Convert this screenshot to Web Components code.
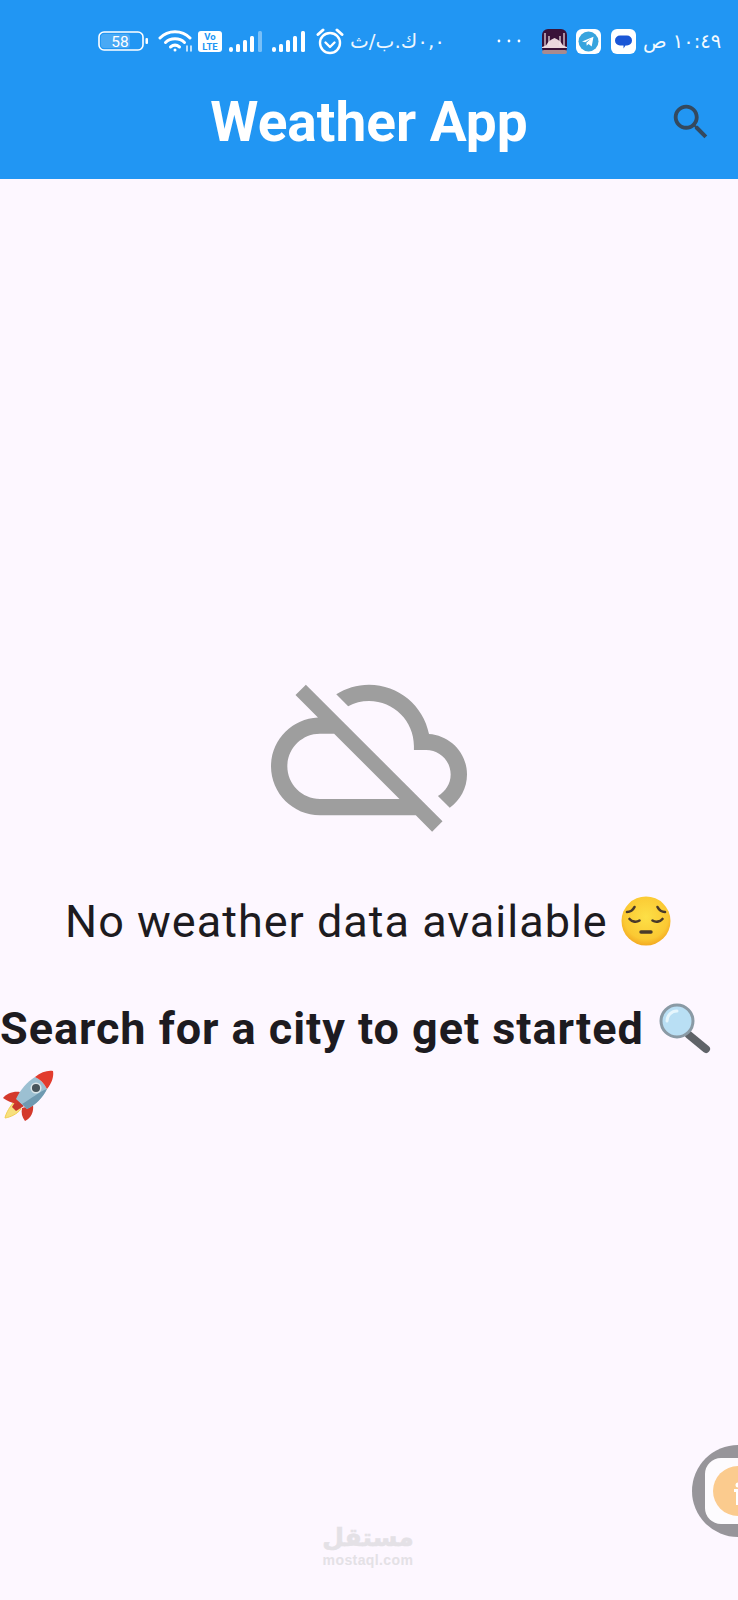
<!DOCTYPE html>
<html lang="en">
<head>
<meta charset="utf-8">
<title>Weather App</title>
<style>
  html, body { margin: 0; height: 100%; }
  body {
    width: 738px;
    height: 1600px;
    overflow: hidden;
    display: flex;
    flex-direction: column;
    position: relative;
    background: #fdf7ff;
    font-family: Roboto, "Liberation Sans", sans-serif;
  }
</style>
</head>
<body>
<weather-header title-text="Weather App"></weather-header>
<empty-state>
  <span slot="first">No weather data available <app-emoji name="pensive"></app-emoji></span>
  <span slot="second">Search for a city to get started <app-emoji name="magnifier"></app-emoji> <app-emoji name="rocket"></app-emoji></span>
</empty-state>
<float-bubble></float-bubble>
<site-mark></site-mark>

<script>
const statusTemplate = document.createElement('template');
statusTemplate.innerHTML = /*html*/`
  <style>
    :host {
      display: flex;
      align-items: center;
      height: 82px;
      padding-left: 98px;
      color: #fff;
      box-sizing: border-box;
    }
    svg { display: block; flex: none; }
    .speed {
      font: 20px "DejaVu Sans", sans-serif;
      margin-left: 6px;
      width: 94px;
      white-space: nowrap;
      opacity: .92;
      direction: ltr;
    }
    .dots { margin-left: 53px; }
    .time {
      font: 19.500px "DejaVu Sans", sans-serif;
      margin-left: 7px;
      white-space: nowrap;
      opacity: .95;
    }
  </style>
  <svg width="50" height="20" viewBox="0 0 50 20" style="margin-right:10px">
    <rect x="1" y="1" width="44" height="18" rx="5" fill="none" stroke="#fff" stroke-width="1.600"/>
    <rect x="3" y="3" width="29" height="14" rx="3" fill="#fff" opacity=".18"/>
    <rect x="47.500" y="7" width="2.500" height="6" rx="1" fill="#fff"/>
    <text x="22" y="15.500" font-family="Roboto" font-size="15.500" font-weight="400" fill="#fff" text-anchor="middle">58</text>
  </svg>
  <svg width="36" height="22" viewBox="0 0 36 22" style="margin-right:4px" fill="none" stroke="#fff" stroke-width="3" stroke-linecap="round">
    <path d="M2 8C10-.5 24-.5 32 8"/>
    <path d="M7.500 12.500C12.500 7.500 21.500 7.500 26.500 12.500"/>
    <path d="M12.500 17C15.500 14.500 18.500 14.500 21.500 17"/>
    <circle cx="17" cy="20" r="1.500" fill="#fff" stroke="none"/>
    <path d="M29 16v5M33 16v5" stroke-width="1.400"/>
  </svg>
  <svg width="24" height="21" viewBox="0 0 24 21" style="margin-right:7px">
    <rect width="24" height="21" rx="3" fill="#fff"/>
    <text x="12" y="9" font-family="Roboto" font-size="9.500" font-weight="700" fill="#2196f3" text-anchor="middle">Vo</text>
    <text x="12" y="18.500" font-family="Roboto" font-size="9.500" font-weight="700" fill="#2196f3" text-anchor="middle">LTE</text>
  </svg>
  <svg width="34" height="21" viewBox="0 0 34 21" style="margin-right:9px" fill="#fff">
    <rect x="0" y="16" width="4" height="5" rx="2"/>
    <rect x="7" y="13" width="4" height="8" rx="1.500"/>
    <rect x="14" y="9" width="4" height="12" rx="1.500"/>
    <rect x="21" y="5" width="4" height="16" rx="1.500"/>
    <rect x="29" y="0" width="4" height="21" rx="1.500" opacity=".4"/>
  </svg>
  <svg width="34" height="21" viewBox="0 0 34 21" style="margin-right:10px" fill="#fff">
    <rect x="0" y="16" width="4" height="5" rx="2"/>
    <rect x="7" y="13" width="4" height="8" rx="1.500"/>
    <rect x="14" y="9" width="4" height="12" rx="1.500"/>
    <rect x="21" y="5" width="4" height="16" rx="1.500"/>
    <rect x="29" y="0" width="4" height="21" rx="1.500"/>
  </svg>
  <svg width="28" height="27" viewBox="0 0 28 27" fill="none" stroke="#fff">
    <circle cx="14" cy="15" r="10" stroke-width="2.400"/>
    <path d="M9.500 14.500l4.500 4.500 4.500-4.500" stroke-width="2.400" stroke-linecap="round" stroke-linejoin="round"/>
    <path d="M2 6.500L7 2M26 6.500L21 2" stroke-width="3" stroke-linecap="round"/>
  </svg>
  <span class="speed">٠,٠ك.ب/ث</span>
  <svg class="dots" width="24" height="4" viewBox="0 0 24 4" fill="#fff">
    <circle cx="2" cy="2" r="1.400"/><circle cx="12" cy="2" r="1.400"/><circle cx="22" cy="2" r="1.400"/>
  </svg>
  <svg width="25" height="25" viewBox="0 0 25 25" style="margin-left:21px">
    <rect width="25" height="25" rx="6" fill="#3a1338"/>
    <path d="M0 19h25v-1c-2-1-4-1-5-3-1-2-3-4-7.500-6C8 11 6 13 5 15c-1 2-3 2-5 3z" fill="#ead7dc"/>
    <path d="M3 4v14M22 4v14M7 7v10M18 7v10" stroke="#f2e4e8" stroke-width="1.200"/>
    <rect x="0" y="21" width="25" height="4" rx="2" fill="#a98a8e"/>
  </svg>
  <svg width="25" height="25" viewBox="0 0 25 25" style="margin-left:9px">
    <rect width="25" height="25" rx="6" fill="#fff"/>
    <circle cx="12.500" cy="12.500" r="10" fill="#37a4de"/>
    <path d="M6 12.500l11.500-4.700-1.800 9.700-3.200-2.400-1.800 1.700-.3-3 4.500-4-5.700 3.400z" fill="#fff"/>
  </svg>
  <svg width="25" height="25" viewBox="0 0 25 25" style="margin-left:10px">
    <rect width="25" height="25" rx="6" fill="#fff"/>
    <path d="M9 6.500h7a5 5 0 0 1 0 10h-1.500l-2 3v-3H9a5 5 0 0 1 0-10z" fill="#1a56d6"/>
  </svg>
  <span class="time" dir="rtl">١٠:٤٩ ص</span>
`;

class StatusBar extends HTMLElement {
  constructor() {
    super();
    this.attachShadow({ mode: 'open' });
    this.shadowRoot.appendChild(statusTemplate.content.cloneNode(true));
  }
}
customElements.define('status-bar', StatusBar);

const headerTemplate = document.createElement('template');
headerTemplate.innerHTML = /*html*/`
  <style>
    :host {
      display: block;
      flex: none;
      background: #2196f3;
      height: 179px;
    }
    .bar {
      display: flex;
      align-items: center;
      height: 80px;
      position: relative;
    }
    h1 {
      flex: 1;
      margin: 0;
      text-align: center;
      color: #fff;
      font: 700 55px/1 Roboto, sans-serif;
    }
    svg {
      position: absolute;
      right: 24px;
      top: 17px;
    }
  </style>
  <status-bar></status-bar>
  <div class="bar">
    <h1></h1>
    <svg width="46" height="46" viewBox="0 0 24 24" fill="#34495e">
      <path d="M15.500 14h-.79l-.28-.27C15.410 12.590 16 11.110 16 9.500 16 5.910 13.090 3 9.500 3S3 5.910 3 9.500 5.910 16 9.500 16c1.610 0 3.090-.59 4.230-1.570l.27.28v.79l5 4.990L20.490 19l-4.990-5zm-6 0C7.010 14 5 11.990 5 9.500S7.010 5 9.500 5 14 7.010 14 9.500 11.990 14 9.500 14z"/>
    </svg>
  </div>
`;

class WeatherHeader extends HTMLElement {
  constructor() {
    super();
    this.attachShadow({ mode: 'open' });
    this.shadowRoot.appendChild(headerTemplate.content.cloneNode(true));
  }

  connectedCallback() {
    this.shadowRoot.querySelector('h1').textContent = this.getAttribute('title-text');
  }
}
customElements.define('weather-header', WeatherHeader);

const emptyTemplate = document.createElement('template');
emptyTemplate.innerHTML = /*html*/`
  <style>
    :host {
      display: flex;
      flex: 1;
      flex-direction: column;
      align-items: center;
      padding-top: 473px;
      color: #1d1b20;
    }
    svg { display: block; }
    .first {
      margin-top: 41px;
      font: 400 45px/66px Roboto, sans-serif;
      letter-spacing: 1px;
      white-space: nowrap;
    }
    .second {
      align-self: stretch;
      margin-top: 40px;
      font: 700 45px/68px Roboto, sans-serif;
      letter-spacing: .95px;
    }
  </style>
  <svg width="196" height="196" viewBox="0 0 24 24" fill="#9e9e9e">
    <path d="M19.350 10.040C18.670 6.590 15.640 4 12 4c-1.480 0-2.850.43-4.010 1.170l1.460 1.460C10.210 6.230 11.080 6 12 6c3.040 0 5.500 2.460 5.500 5.500v.5H19c1.660 0 3 1.340 3 3 0 1.130-.64 2.110-1.560 2.620l1.450 1.450C23.160 18.160 24 16.680 24 15c0-2.640-2.050-4.780-4.650-4.960zM3 5.270l2.750 2.740C2.560 8.150 0 10.770 0 14c0 3.310 2.690 6 6 6h11.730l2 2L21 20.730 4.270 4 3 5.270zM7.730 10l8 8H6c-2.210 0-4-1.790-4-4s1.790-4 4-4h1.730z"/>
  </svg>
  <div class="first"><slot name="first"></slot></div>
  <div class="second"><slot name="second"></slot></div>
`;

class EmptyState extends HTMLElement {
  constructor() {
    super();
    this.attachShadow({ mode: 'open' });
    this.shadowRoot.appendChild(emptyTemplate.content.cloneNode(true));
  }
}
customElements.define('empty-state', EmptyState);

const emojiArt = {
  pensive: `
    <defs><radialGradient id="f" cx=".5" cy=".42" r=".6"><stop offset="0" stop-color="#fde047"/><stop offset=".75" stop-color="#fbc933"/><stop offset="1" stop-color="#f2a51f"/></radialGradient></defs>
    <circle cx="26" cy="26" r="24.500" fill="url(#f)"/>
    <g fill="none" stroke="#4a3a2a" stroke-width="2.600" stroke-linecap="round">
      <path d="M7 17c3 0 6-2 7.500-5M45 17c-3 0-6-2-7.500-5"/>
      <path d="M9.500 24c2.500 3 7 3.500 10 1.500M42.500 24c-2.500 3-7 3.500-10 1.500"/>
      <path d="M21 37h10" stroke-width="3.400"/>
    </g>`,
  magnifier: `
    <g transform="translate(2,1)">
      <path d="M31 32l17 14" stroke="#5f6368" stroke-width="8" stroke-linecap="round"/>
      <circle cx="19" cy="18" r="16" fill="#b9dff4" stroke="#8a9aa5" stroke-width="3"/>
      <path d="M9 18a10 10 0 0 1 10-10" fill="none" stroke="#e6f6fd" stroke-width="3" stroke-linecap="round"/>
    </g>`,
  rocket: `
    <g transform="translate(3,-1)">
      <path d="M12 32C7 37 3 44 2 49c6-1 12-4 16-9z" fill="#f7e07e" stroke="#f2cf55"/>
      <path d="M14 30l7 7-8 5-4-4z" fill="#c8372c"/>
      <path d="M17 23C10 22 3 25 0 29c4 3 9 5 14 6z" fill="#d4392c"/>
      <path d="M30 36c1 7-2 13-8 16-3-4-4-8-3-13z" fill="#d4392c"/>
      <path d="M32 8c5 2 9 6 12 12-4 8-11 16-20 20L13 30c4-9 11-17 19-22z" fill="#9cc0d2"/>
      <path d="M44 20c-4 8-11 16-20 20l-5-5c9-5 18-13 25-15z" fill="#6f9ab1"/>
      <path d="M32 8c6-5 13-7 18-6 1 5-1 12-6 18-3-6-7-10-12-12z" fill="#e23c2e"/>
      <circle cx="33" cy="19" r="4.800" fill="#48555c" stroke="#dbe6ea" stroke-width="1.500"/>
    </g>`
};

class AppEmoji extends HTMLElement {
  constructor() {
    super();
    this.attachShadow({ mode: 'open' });
  }

  connectedCallback() {
    this.shadowRoot.innerHTML = `
      <style>
        :host { display: inline-block; width: 53px; height: 52px; vertical-align: -10px; }
        svg { display: block; overflow: visible; }
      </style>
      <svg width="52" height="52" viewBox="0 0 52 52">${emojiArt[this.getAttribute('name')]}</svg>
    `;
  }
}
customElements.define('app-emoji', AppEmoji);

const bubbleTemplate = document.createElement('template');
bubbleTemplate.innerHTML = /*html*/`
  <style>
    :host {
      position: absolute;
      right: 0;
      top: 1445px;
      width: 46px;
      height: 92px;
      overflow: hidden;
      display: block;
    }
    .ring {
      width: 92px;
      height: 92px;
      border-radius: 50%;
      background: #97959a;
      position: relative;
    }
    .inner {
      position: absolute;
      left: 13px;
      top: 13px;
      width: 66px;
      height: 66px;
      border-radius: 16px;
      background: #fdfbfe;
    }
    .dot {
      position: absolute;
      left: 8px;
      top: 8px;
      width: 50px;
      height: 50px;
      border-radius: 50%;
      background: #fbcb8e;
    }
    svg { position: absolute; left: 21px; top: 16px; overflow: hidden; }
  </style>
  <div class="ring">
    <div class="inner">
      <div class="dot">
        <svg width="4" height="24" viewBox="0 0 4 24" fill="#fff">
          <circle cx="4" cy="3" r="2.500"/>
          <path d="M-3 7h14v3H6v13H2V10h-5z"/>
        </svg>
      </div>
    </div>
  </div>
`;

class FloatBubble extends HTMLElement {
  constructor() {
    super();
    this.attachShadow({ mode: 'open' });
    this.shadowRoot.appendChild(bubbleTemplate.content.cloneNode(true));
  }
}
customElements.define('float-bubble', FloatBubble);

const markTemplate = document.createElement('template');
markTemplate.innerHTML = /*html*/`
  <style>
    :host {
      position: absolute;
      left: 318px;
      top: 1523px;
      width: 100px;
      display: block;
      text-align: center;
      color: #e4e1e6;
    }
    .ar { font: 700 25px/30px "DejaVu Sans", sans-serif; -webkit-text-stroke: .6px #e4e1e6; }
    .en { font: 700 14px/14px "Liberation Sans", sans-serif; letter-spacing: .4px; }
  </style>
  <div class="ar" dir="rtl">مستقل</div>
  <div class="en">mostaql.com</div>
`;

class SiteMark extends HTMLElement {
  constructor() {
    super();
    this.attachShadow({ mode: 'open' });
    this.shadowRoot.appendChild(markTemplate.content.cloneNode(true));
  }
}
customElements.define('site-mark', SiteMark);
</script>
</body>
</html>
